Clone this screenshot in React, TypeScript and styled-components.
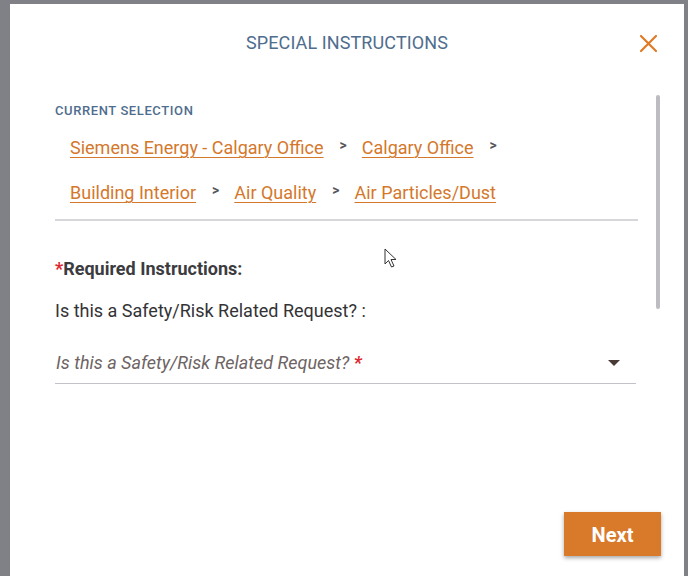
import React from "react";
import styled, { createGlobalStyle } from "styled-components";

const Global = createGlobalStyle`
  html, body { margin: 0; padding: 0; background: #808087; }
  body { font-family: Roboto, "Noto Sans", "Liberation Sans", sans-serif; }
  * { box-sizing: border-box; }
`;

const Backdrop = styled.div`
  width: 688px;
  height: 576px;
  padding: 4px 4px 0 10px;
  background: #808087;
  overflow: hidden;
`;

const Dialog = styled.div`
  position: relative;
  height: 572px;
  background: #ffffff;
  display: flex;
  flex-direction: column;
`;

const Header = styled.div`
  height: 77px;
  display: flex;
  align-items: center;
  justify-content: center;
  position: relative;
`;

const Title = styled.h2`
  margin: 0;
  font-size: 18px;
  font-weight: 400;
  color: #4f6d8e;
  letter-spacing: 0.1px;
  text-transform: uppercase;
`;

const Close = styled.button`
  position: absolute;
  right: 26px;
  top: 29px;
  width: 20px;
  height: 20px;
  padding: 0;
  border: none;
  background: none;
  display: flex;
  align-items: center;
  justify-content: center;
`;

const Body = styled.div`
  flex: 1;
  padding: 21px 46px 0 45px;
`;

const Label = styled.div`
  font-size: 13px;
  line-height: 18px;
  font-weight: 500;
  color: #4f6d8e;
  letter-spacing: 0.6px;
`;

const Crumbs = styled.div`
  margin-top: 5px;
  display: flex;
  flex-wrap: wrap;
  padding-right: 40px;
`;

const Crumb = styled.div`
  display: flex;
  align-items: center;
  height: 45px;
  margin-left: 15px;
  gap: 16px;
`;

const Link = styled.a`
  font-size: 18px;
  color: #d4782c;
  text-decoration: underline;
  text-underline-offset: 3px;
  text-decoration-thickness: 1px;
  cursor: pointer;
`;

const Sep = styled.span`
  font-size: 14px;
  font-weight: 700;
  color: #55555c;
  margin-top: -6px;
`;

const Divider = styled.div`
  height: 2px;
  background: #d6d6db;
  margin-top: 4px;
`;

const Required = styled.div`
  margin-top: 37px;
  font-size: 18px;
  font-weight: 700;
  color: #3c3c40;
`;

const Star = styled.span`
  color: #e0262e;
  font-weight: 700;
`;

const Question = styled.div`
  margin-top: 21px;
  font-size: 18px;
  color: #333336;
`;

const Select = styled.div`
  margin-top: 27px;
  margin-right: 2px;
  height: 36px;
  display: flex;
  align-items: center;
  justify-content: space-between;
  padding: 0 16px 6px 1px;
  border-bottom: 1px solid #c4c2c8;
`;

const Placeholder = styled.span`
  font-size: 18px;
  font-style: italic;
  color: #6e6464;
`;

const Footer = styled.div`
  display: flex;
  justify-content: flex-end;
  padding: 0 23px 20px 0;
`;

const NextButton = styled.button`
  width: 97px;
  height: 44px;
  border: none;
  background: #d9792a;
  color: #ffffff;
  font-family: Roboto, "Liberation Sans", sans-serif;
  font-size: 20px;
  font-weight: 700;
  padding-top: 2px;
  box-shadow: 0 2px 4px rgba(0, 0, 0, 0.35);
  cursor: pointer;
`;

const ScrollThumb = styled.div`
  position: absolute;
  left: 646px;
  top: 91px;
  width: 4px;
  height: 214px;
  border-radius: 2px;
  background: #bdbdc1;
`;

const Pointer = styled.svg`
  position: absolute;
  left: 374px;
  top: 244px;
`;

const path = [
  "Siemens Energy - Calgary Office",
  "Calgary Office",
  "Building Interior",
  "Air Quality",
  "Air Particles/Dust",
];

export default function App() {
  return (
    <>
      <Global />
      <Backdrop>
        <Dialog>
          <Header>
            <Title>Special Instructions</Title>
            <Close aria-label="close">
              <svg width="19" height="19" viewBox="0 0 19 19">
                <path d="M2 2 L17 17 M17 2 L2 17" stroke="#e07a26" strokeWidth="2.2" strokeLinecap="round" />
              </svg>
            </Close>
          </Header>
          <Body>
            <Label>CURRENT SELECTION</Label>
            <Crumbs>
              {path.map((p, i) => (
                <Crumb key={p}>
                  <Link>{p}</Link>
                  {i < path.length - 1 && <Sep>&gt;</Sep>}
                </Crumb>
              ))}
            </Crumbs>
            <Divider />
            <Required>
              <Star>*</Star>Required Instructions:
            </Required>
            <Question>Is this a Safety/Risk Related Request? :</Question>
            <Select>
              <Placeholder>
                Is this a Safety/Risk Related Request? <Star>*</Star>
              </Placeholder>
              <svg width="12" height="6" viewBox="0 0 12 6">
                <path d="M0 0 L12 0 L6 6 Z" fill="#4a3a36" />
              </svg>
            </Select>
          </Body>
          <Footer>
            <NextButton>Next</NextButton>
          </Footer>
          <ScrollThumb />
          <Pointer width="16" height="22" viewBox="0 0 16 22">
            <path d="M1 1 L1 16 L4.5 12.5 L7.5 19 L10 18 L7 11.5 L12 11.5 Z" fill="#ffffff" stroke="#333" strokeWidth="1" strokeLinejoin="round" />
          </Pointer>
        </Dialog>
      </Backdrop>
    </>
  );
}
